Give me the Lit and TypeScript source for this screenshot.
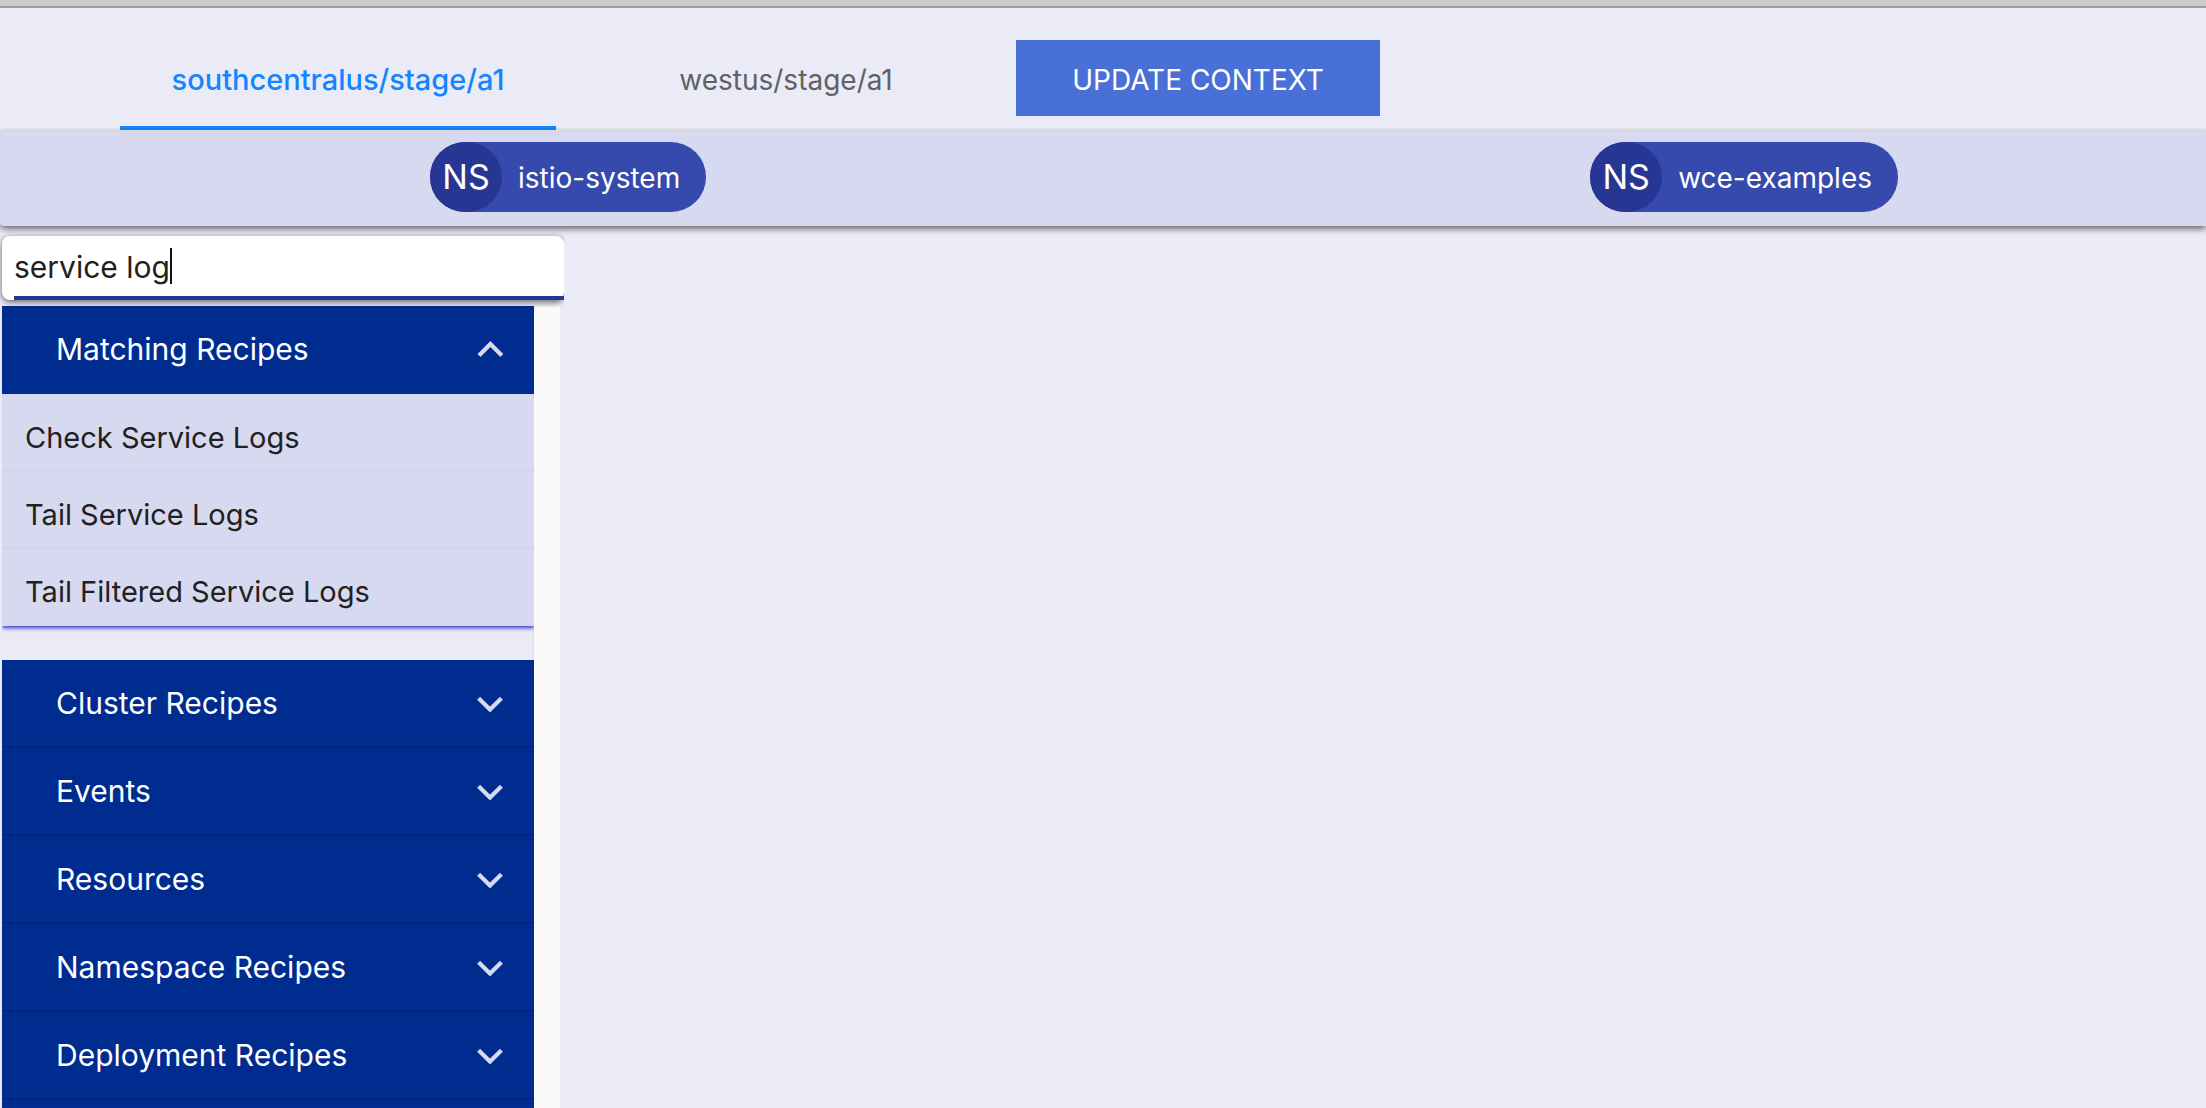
import { LitElement, html, css, svg } from 'lit';
import { customElement, property, state } from 'lit/decorators.js';
import { classMap } from 'lit/directives/class-map.js';

const CONTEXTS = ['southcentralus/stage/a1', 'westus/stage/a1'];
const NAMESPACES = ['istio-system', 'wce-examples'];
const MATCHES = ['Check Service Logs', 'Tail Service Logs', 'Tail Filtered Service Logs'];
const GROUPS = ['Cluster Recipes', 'Events', 'Resources', 'Namespace Recipes', 'Deployment Recipes'];

const chevronUp = svg`<path d="M6.5 15.2L12.2 9.5l5.7 5.7" />`;
const chevronDown = svg`<path d="M6.3 9.6L12 15.3l5.7-5.7" />`;

@customElement('namespace-chip')
export class NamespaceChip extends LitElement {
  @property() name = '';

  static styles = css`
    :host {
      display: block;
    }
    .chip {
      display: flex;
      align-items: center;
      gap: 16px;
      height: 70px;
      padding-right: 26px;
      border-radius: 35px;
      background: #3649ac;
      color: #fff;
      font-size: 28px;
      line-height: 32px;
    }
    .avatar {
      display: flex;
      align-items: center;
      justify-content: center;
      width: 72px;
      height: 70px;
      border-radius: 36px;
      background: #283693;
      font-size: 34px;
    }
    .name {
      padding-top: 2px;
    }
  `;

  render() {
    return html`<div class="chip"><span class="avatar">NS</span><span class="name">${this.name}</span></div>`;
  }
}

@customElement('recipe-header')
export class RecipeHeader extends LitElement {
  @property() label = '';
  @property({ type: Boolean }) open = false;

  static styles = css`
    :host {
      display: block;
    }
    .header {
      display: flex;
      align-items: center;
      justify-content: space-between;
      box-sizing: border-box;
      width: 100%;
      height: 88px;
      padding: 0 20px 0 54px;
      border: 0;
      border-bottom: 2px solid #00257c;
      background: #002b8f;
      color: #fff;
      font: inherit;
      font-size: 30px;
      line-height: 36px;
      text-align: left;
      cursor: pointer;
    }
    .header.open {
      border-bottom-color: #002b8f;
    }
    .icon {
      width: 48px;
      height: 48px;
      fill: none;
      stroke: #d7d9f0;
      stroke-width: 2.1;
    }
  `;

  render() {
    return html`
      <button class=${classMap({ header: true, open: this.open })} aria-expanded=${this.open ? 'true' : 'false'}>
        <span>${this.label}</span>
        <svg class="icon" viewBox="0 0 24 24" aria-hidden="true">${this.open ? chevronUp : chevronDown}</svg>
      </button>
    `;
  }
}

@customElement('app-root')
export class AppRoot extends LitElement {
  @state() private active = 0;

  static styles = css`
    :host {
      display: block;
      font-family: Inter, 'Liberation Sans', sans-serif;
    }
    .shell {
      display: flex;
      flex-direction: column;
      height: 100vh;
      overflow: hidden;
      background: #ebebf7;
    }
    .chrome {
      flex: none;
      height: 6px;
      border-bottom: 2px solid #9b9ca2;
      background: #cbcbcb;
    }
    .contexts {
      display: flex;
      flex: none;
      align-items: flex-end;
      height: 122px;
      padding-left: 120px;
    }
    .tabs {
      display: flex;
    }
    .tab {
      height: 100px;
      min-width: 436px;
      padding: 0;
      border: 0;
      background: none;
      color: #606067;
      font: inherit;
      font-size: 28px;
      line-height: 32px;
      cursor: pointer;
    }
    .tab:last-child {
      min-width: 460px;
    }
    .tab.active {
      box-shadow: inset 0 -4px #1585ff;
      color: #1585ff;
      font-size: 29px;
      font-weight: 500;
    }
    .update {
      height: 76px;
      min-width: 364px;
      margin-bottom: 14px;
      padding: 4px 0 0;
      border: 0;
      background: #4870d6;
      color: #fff;
      font: inherit;
      font-size: 28px;
      line-height: 32px;
      cursor: pointer;
    }
    .namespaces {
      display: flex;
      flex: none;
      justify-content: space-between;
      padding: 10px 308px 14px 430px;
      border-top: 2px solid #dad9dc;
      border-radius: 4px 0 0 4px;
      background: #d7d9f0;
      box-shadow: 0 3px 6px rgba(0, 0, 0, 0.55);
      clip-path: inset(-2px 0 -12px 0);
    }
    .sidebar {
      display: flex;
      flex: 1;
      flex-direction: column;
      gap: 6px;
      width: 562px;
      min-height: 0;
      padding: 10px 0 0 2px;
    }
    .search {
      position: relative;
      flex: none;
      height: 64px;
      border-radius: 8px;
      background: #fff;
      box-shadow: 0 2px 6px rgba(0, 0, 0, 0.6);
      clip-path: inset(-8px 0 -8px -2px);
    }
    .query {
      box-sizing: border-box;
      width: 100%;
      height: 64px;
      padding: 0 12px 2px;
      border: 0;
      outline: 0;
      background: none;
      color: #212121;
      caret-color: transparent;
      font: inherit;
      font-size: 30px;
    }
    .underline {
      position: absolute;
      right: 0;
      bottom: 0;
      left: 12px;
      height: 4px;
      background: #283693;
    }
    .caret {
      position: absolute;
      top: 12px;
      left: 168px;
      width: 2px;
      height: 36px;
      background: #111;
    }
    .panel {
      display: flex;
      flex: 1;
      min-height: 0;
      width: 558px;
    }
    .recipes {
      display: flex;
      flex: 1;
      flex-direction: column;
      box-shadow: inset -2px 0 #e4e4e6;
    }
    .track {
      box-sizing: border-box;
      width: 26px;
      background: #fafafa;
    }
    .matches {
      margin: 0 0 34px;
      padding: 0;
      background: #d7d9f0;
      box-shadow: 0 2px 4px #2c33c8;
      clip-path: inset(0 0 -8px 0);
      list-style: none;
    }
    .match {
      box-sizing: border-box;
      height: 77px;
      padding: 10px 23px 0;
      border-bottom: 1px solid #cdd0ed;
    }
    .match:last-child {
      height: 78px;
      border-bottom: 0;
    }
    .link {
      color: #212121;
      font-size: 29px;
      line-height: 68px;
      text-decoration: none;
    }
    .groups {
      flex: 1;
      background: #002b8f;
    }
  `;

  render() {
    return html`
      <div class="shell">
        <div class="chrome"></div>
        <header class="contexts">
          <div class="tabs" role="tablist">
            ${CONTEXTS.map(
              (name, i) => html`
                <button
                  class=${classMap({ tab: true, active: i === this.active })}
                  role="tab"
                  aria-selected=${i === this.active ? 'true' : 'false'}
                  @click=${() => (this.active = i)}
                >${name}</button>
              `
            )}
          </div>
          <button class="update">UPDATE CONTEXT</button>
        </header>
        <div class="namespaces">
          ${NAMESPACES.map((name) => html`<namespace-chip .name=${name}></namespace-chip>`)}
        </div>
        <aside class="sidebar">
          <div class="search">
            <input class="query" type="text" aria-label="Search" .value=${'service log'} />
            <span class="underline"></span>
            <span class="caret"></span>
          </div>
          <div class="panel">
            <div class="recipes">
              <recipe-header label="Matching Recipes" open></recipe-header>
              <ul class="matches">
                ${MATCHES.map((name) => html`<li class="match"><a class="link" href="#">${name}</a></li>`)}
              </ul>
              <div class="groups">
                ${GROUPS.map((name) => html`<recipe-header .label=${name}></recipe-header>`)}
              </div>
            </div>
            <div class="track"></div>
          </div>
        </aside>
      </div>
    `;
  }
}
